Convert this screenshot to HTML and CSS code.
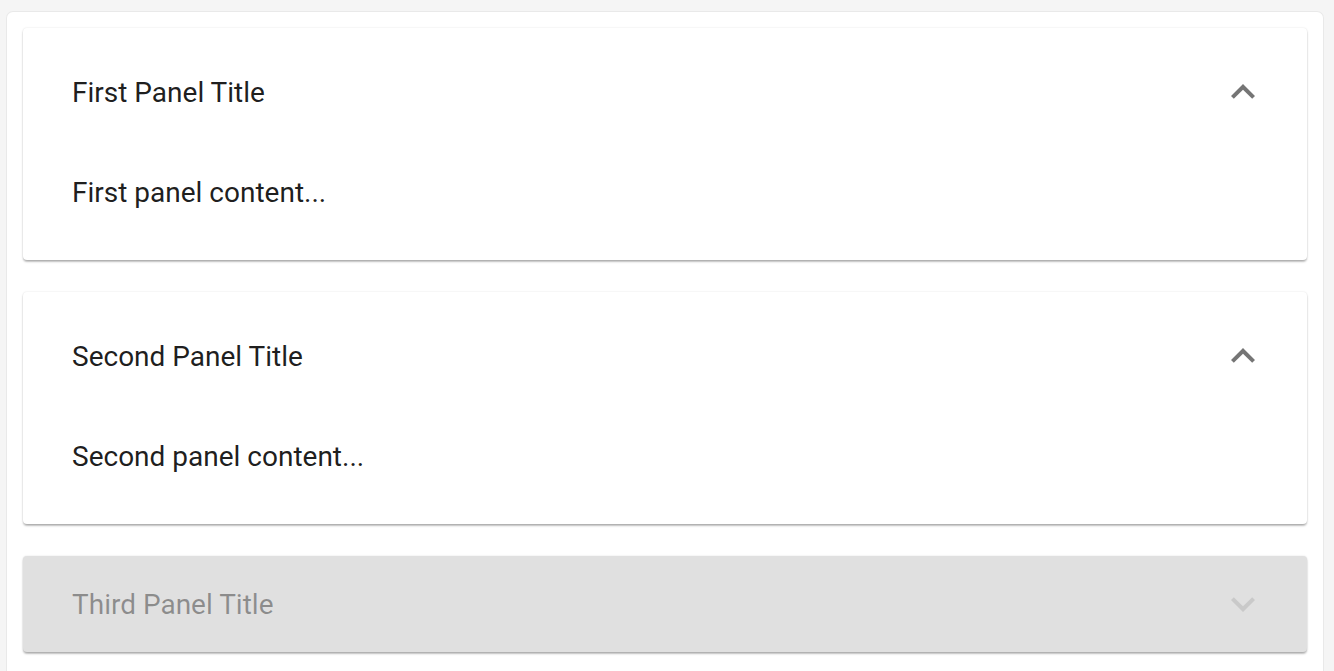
FILE: index.html
```html
<!DOCTYPE html>
<html>
<head>
<meta charset="utf-8">
<link rel="stylesheet" href="styles.css">
</head>
<body>
<div class="frame">
  <div class="panel expanded">
    <div class="summary">
      <span class="title">First Panel Title</span>
      <svg class="chev" viewBox="0 0 24 24"><path d="M12 8l-6 6 1.41 1.41L12 10.83l4.59 4.58L18 14z"/></svg>
    </div>
    <div class="details">First panel content...</div>
  </div>
  <div class="panel expanded">
    <div class="summary">
      <span class="title">Second Panel Title</span>
      <svg class="chev" viewBox="0 0 24 24"><path d="M12 8l-6 6 1.41 1.41L12 10.83l4.59 4.58L18 14z"/></svg>
    </div>
    <div class="details">Second panel content...</div>
  </div>
  <div class="panel disabled">
    <div class="summary">
      <span class="title">Third Panel Title</span>
      <svg class="chev" viewBox="0 0 24 24"><path d="M16.59 8.59L12 13.17 7.41 8.59 6 10l6 6 6-6z"/></svg>
    </div>
  </div>
</div>
</body>
</html>
```
FILE: styles.css
```css
html, body {
  margin: 0;
  padding: 0;
  background: #f5f5f5;
  font-family: Roboto, "Liberation Sans", sans-serif;
}
body {
  padding: 11px 10px 0 6px;
  height: 671px;
  box-sizing: border-box;
  overflow: hidden;
  display: flex;
  flex-direction: column;
}
.frame {
  flex: 1;
  background: #fff;
  border: 1px solid #e9e9e9;
  border-bottom: none;
  border-radius: 7px 7px 0 0;
  padding: 16px 16px 0;
  display: flex;
  flex-direction: column;
  gap: 32px;
}
.panel {
  background: #fff;
  border-radius: 4px;
  box-shadow: 0 2px 2px rgba(0,0,0,0.22), 0 0 2px rgba(0,0,0,0.12), 0 3px 2px -2px rgba(0,0,0,0.12);
}
.summary {
  height: 128px;
  padding: 0 40px 0 49px;
  display: flex;
  align-items: center;
  justify-content: space-between;
}
.title {
  font-size: 28px;
  color: rgba(0,0,0,0.89);
}
.chev {
  width: 48px;
  height: 48px;
  fill: rgba(0,0,0,0.54);
}
.details {
  padding: 17px 49px 47px;
  font-size: 28px;
  line-height: 40px;
  color: rgba(0,0,0,0.89);
}
.panel.disabled {
  background: #e0e0e0;
}
.panel.disabled .summary {
  height: 96px;
}
.panel.disabled .title {
  color: rgba(0,0,0,0.38);
}
.panel.disabled .chev {
  fill: rgba(0,0,0,0.1);
}
```
